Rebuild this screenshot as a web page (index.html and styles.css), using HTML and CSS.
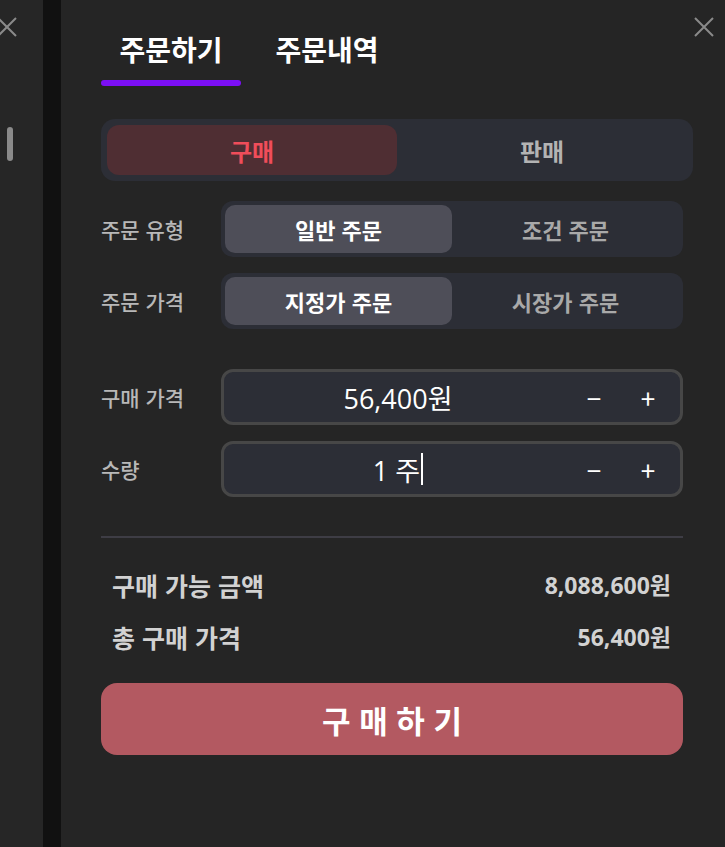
FILE: index.html
```html
<!DOCTYPE html>
<html lang="ko">
<head>
<meta charset="utf-8">
<title>주문하기</title>
<link rel="stylesheet" href="styles.css">
</head>
<body>
<div class="app">
  <aside class="side">
    <svg class="close close-left" width="20" height="20" viewBox="0 0 20 20"><path d="M1 1L19 19M19 1L1 19" stroke="#8a8a8a" stroke-width="2" fill="none"/></svg>
    <div class="thumb"></div>
  </aside>
  <div class="strip"></div>
  <main class="panel">
    <svg class="close close-right" width="20" height="20" viewBox="0 0 20 20"><path d="M1 1L19 19M19 1L1 19" stroke="#8a8a8a" stroke-width="2" fill="none"/></svg>
    <nav class="tabs">
      <div class="tab active">주문하기</div>
      <div class="tab">주문내역</div>
    </nav>

    <div class="side-toggle">
      <div class="side-opt buy">구매</div>
      <div class="side-opt">판매</div>
    </div>

    <div class="row">
      <div class="label">주문 유형</div>
      <div class="seg">
        <div class="seg-opt on">일반 주문</div>
        <div class="seg-opt">조건 주문</div>
      </div>
    </div>
    <div class="row row-gap">
      <div class="label">주문 가격</div>
      <div class="seg">
        <div class="seg-opt on">지정가 주문</div>
        <div class="seg-opt">시장가 주문</div>
      </div>
    </div>

    <div class="row row-input">
      <div class="label">구매 가격</div>
      <div class="field">
        <div class="value">56,400원</div>
        <div class="step">−</div>
        <div class="step">+</div>
      </div>
    </div>
    <div class="row row-gap">
      <div class="label">수량</div>
      <div class="field">
        <div class="value">1 주<span class="caret"></span></div>
        <div class="step">−</div>
        <div class="step">+</div>
      </div>
    </div>

    <div class="divider"></div>

    <div class="sum">
      <div class="sum-row"><span>구매 가능 금액</span><span>8,088,600원</span></div>
      <div class="sum-row"><span>총 구매 가격</span><span>56,400원</span></div>
    </div>

    <button class="buy-btn">구 매 하 기</button>
  </main>
</div>
</body>
</html>
```

FILE: styles.css
```css
* { box-sizing: border-box; }
html, body {
  margin: 0;
  padding: 0;
  height: 100%;
  background: #252525;
  font-family: "Noto Sans CJK KR", "Noto Sans", sans-serif;
}
.app {
  display: flex;
  height: 847px;
}
.side {
  width: 43px;
  background: #262626;
  position: relative;
}
.close { position: absolute; }
.close-left { left: -3px; top: 17px; }
.close-right { right: 11px; top: 17px; }
.thumb {
  position: absolute;
  left: 7px;
  top: 127px;
  width: 6px;
  height: 34px;
  border-radius: 3px;
  background: #8a8a8a;
}
.strip {
  width: 18px;
  background: #111111;
}
.panel {
  flex: 1;
  position: relative;
  padding: 0 42px 0 40px;
  display: flex;
  flex-direction: column;
}
.tabs {
  display: flex;
  gap: 16px;
  padding-top: 31px;
}
.tab {
  width: 140px;
  text-align: center;
  font-size: 28px;
  font-weight: 700;
  line-height: 36px;
  color: #ffffff;
  padding-bottom: 13px;
  border-bottom: 6px solid transparent;
}
.tab.active {
  position: relative;
}
.tab.active::after {
  content: "";
  position: absolute;
  left: 0;
  right: 0;
  bottom: -6px;
  height: 6px;
  border-radius: 3px;
  background: #7b0ff5;
}
.side-toggle {
  margin-top: 33px;
  margin-right: -10px;
  height: 62px;
  background: #2c2e36;
  border-radius: 14px;
  padding: 6px;
  display: flex;
}
.side-opt {
  flex: 1;
  display: flex;
  align-items: center;
  justify-content: center;
  border-radius: 12px;
  font-size: 24px;
  font-weight: 700;
  color: #b3b3b3;
}
.side-opt.buy {
  flex: 0 0 290px;
  background: #4f2e33;
  color: #f04d5a;
}
.row {
  display: flex;
  align-items: center;
  margin-top: 20px;
}
.row-gap { margin-top: 16px; }
.row-input { margin-top: 40px; }
.label {
  width: 120px;
  font-size: 21px;
  font-weight: 500;
  color: #b8b8b8;
}
.seg {
  flex: 1;
  height: 56px;
  background: #2c2e36;
  border-radius: 12px;
  padding: 4px;
  display: flex;
}
.seg-opt {
  flex: 1;
  display: flex;
  align-items: center;
  justify-content: center;
  border-radius: 10px;
  font-size: 22px;
  font-weight: 700;
  color: #a9a9a9;
}
.seg-opt.on {
  flex: 0 0 227px;
  background: #4e4e58;
  color: #ffffff;
}
.field {
  flex: 1;
  height: 56px;
  background: #2c2e36;
  border: 3px solid #474747;
  border-radius: 12px;
  display: flex;
  align-items: center;
  padding-right: 5px;
  color: #ffffff;
}
.value {
  flex: 1;
  padding-left: 5px;
  text-align: center;
  font-family: "Open Sans", "Noto Sans CJK KR", sans-serif;
  font-size: 27px;
  font-weight: 400;
  display: flex;
  justify-content: center;
  align-items: center;
}
.caret {
  display: inline-block;
  width: 2px;
  height: 32px;
  background: #ffffff;
  margin-left: 1px;
}
.step {
  width: 54px;
  text-align: center;
  font-size: 26px;
  color: #ffffff;
}
.divider {
  height: 2px;
  background: #3e3d45;
  margin-top: 39px;
}
.sum {
  padding: 32px 12px 0 11px;
  display: flex;
  flex-direction: column;
  gap: 22px;
}
.sum-row {
  display: flex;
  justify-content: space-between;
  align-items: center;
  font-size: 25px;
  font-weight: 700;
  line-height: 30px;
  color: #d2d2d2;
}
.sum-row span:last-child {
  font-family: "Open Sans", "Noto Sans CJK KR", sans-serif;
  font-size: 23px;
}
.buy-btn {
  margin-top: 31px;
  height: 72px;
  border: none;
  border-radius: 16px;
  background: #b35961;
  color: #ffffff;
  font-family: "Noto Sans CJK KR", sans-serif;
  font-size: 31px;
  font-weight: 700;
  padding: 0;
}
```
